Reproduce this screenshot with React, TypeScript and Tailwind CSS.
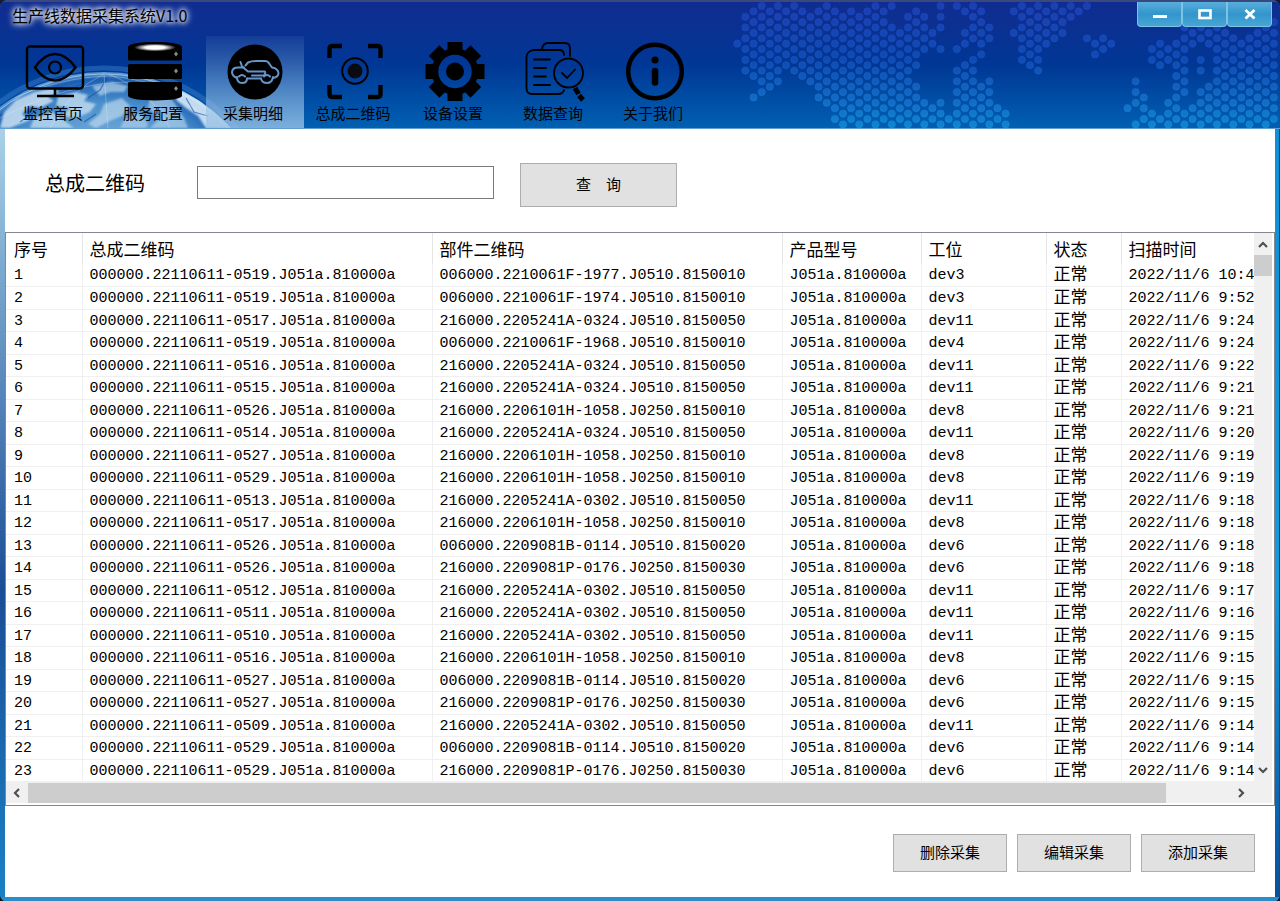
import type { ReactNode } from "react";

type Row = [string, string, string, string];

const ASSEMBLY_PREFIX = "000000.22110611-";
const MODEL = "J051a.810000a";

/* assembly serial, part code, station, scan time */
const ROWS: Row[] = [
  ["0519", "006000.2210061F-1977.J0510.8150010", "dev3", "10:4"],
  ["0519", "006000.2210061F-1974.J0510.8150010", "dev3", "9:52"],
  ["0517", "216000.2205241A-0324.J0510.8150050", "dev11", "9:24"],
  ["0519", "006000.2210061F-1968.J0510.8150010", "dev4", "9:24"],
  ["0516", "216000.2205241A-0324.J0510.8150050", "dev11", "9:22"],
  ["0515", "216000.2205241A-0324.J0510.8150050", "dev11", "9:21"],
  ["0526", "216000.2206101H-1058.J0250.8150010", "dev8", "9:21"],
  ["0514", "216000.2205241A-0324.J0510.8150050", "dev11", "9:20"],
  ["0527", "216000.2206101H-1058.J0250.8150010", "dev8", "9:19"],
  ["0529", "216000.2206101H-1058.J0250.8150010", "dev8", "9:19"],
  ["0513", "216000.2205241A-0302.J0510.8150050", "dev11", "9:18"],
  ["0517", "216000.2206101H-1058.J0250.8150010", "dev8", "9:18"],
  ["0526", "006000.2209081B-0114.J0510.8150020", "dev6", "9:18"],
  ["0526", "216000.2209081P-0176.J0250.8150030", "dev6", "9:18"],
  ["0512", "216000.2205241A-0302.J0510.8150050", "dev11", "9:17"],
  ["0511", "216000.2205241A-0302.J0510.8150050", "dev11", "9:16"],
  ["0510", "216000.2205241A-0302.J0510.8150050", "dev11", "9:15"],
  ["0516", "216000.2206101H-1058.J0250.8150010", "dev8", "9:15"],
  ["0527", "006000.2209081B-0114.J0510.8150020", "dev6", "9:15"],
  ["0527", "216000.2209081P-0176.J0250.8150030", "dev6", "9:15"],
  ["0509", "216000.2205241A-0302.J0510.8150050", "dev11", "9:14"],
  ["0529", "006000.2209081B-0114.J0510.8150020", "dev6", "9:14"],
  ["0529", "216000.2209081P-0176.J0250.8150030", "dev6", "9:14"],
];

const HEADERS = ["序号", "总成二维码", "部件二维码", "产品型号", "工位", "状态", "扫描时间"];

/* Honeycomb world map: for each column, the [first, last] runs of dots. */
const MAP: number[][][] = [
  [[7, 7]], [[2, 12]], [[1, 13], [17, 17]], [[0, 16]], [[1, 15]], [[0, 14]], [[1, 11]], [[0, 12]],
  [[1, 13]], [[2, 14]], [[1, 17]], [[0, 18]], [[1, 21]], [[2, 22]], [[1, 21]], [[2, 22]],
  [[1, 21]], [[0, 22]], [[1, 21]], [[0, 0], [4, 22]], [[5, 21]], [[2, 22]], [[1, 11], [15, 21]], [[2, 8], [18, 22]],
  [[5, 7], [19, 21]], [[0, 4], [8, 8], [18, 22]], [[21, 21]], [[0, 0], [8, 8], [12, 22]], [[1, 1], [5, 7], [11, 21]], [[0, 6], [10, 22]], [[1, 9], [15, 21]], [[4, 6], [14, 22]],
  [[19, 21]], [[20, 22]], [[1, 1], [5, 5]], [[0, 10]], [[1, 11]], [[0, 12]], [[1, 7]], [[0, 6]],
  [[1, 5]], [[0, 2]], [[1, 1]], [[0, 0], [6, 6]], [[7, 9]], [[6, 8]], [[7, 7]], [],
  [[19, 19]], [[14, 18], [22, 22]], [[17, 21]], [[8, 10], [20, 22]], [[7, 11], [21, 21]], [[8, 10], [18, 22]], [[7, 21]], [[4, 16], [20, 22]],
  [[5, 7], [19, 21]], [[4, 6], [10, 12], [16, 22]], [[5, 7], [15, 21]], [[4, 22]], [[5, 21]], [[6, 22]], [[7, 21]], [[6, 22]],
  [[5, 21]], [[4, 22]], [[3, 21]],
];

function DotMap() {
  const dots: ReactNode[] = [];
  MAP.forEach((runs, k) => {
    runs.forEach(([a, b]) => {
      for (let r = a; r <= b; r += 2) {
        dots.push(<circle key={`${k}-${r}`} cx={7.3 + k * 8.13} cy={4 + r * 5.38} r={3.6} />);
      }
    });
  });
  return (
    <svg className="absolute top-0 right-0 h-32 w-[550px]" viewBox="0 0 550 128" aria-hidden="true">
      <defs>
        <linearGradient id="dots" gradientUnits="userSpaceOnUse" x1="0" y1="0" x2="0" y2="128">
          <stop offset="0" stopColor="#1f45bd" />
          <stop offset="0.45" stopColor="#1552c0" />
          <stop offset="0.75" stopColor="#1873cd" />
          <stop offset="1" stopColor="#1294dc" />
        </linearGradient>
      </defs>
      <g fill="url(#dots)" fillOpacity="0.75" stroke="url(#dots)" strokeOpacity="0.6">{dots}</g>
    </svg>
  );
}

function Globe() {
  return (
    <svg className="absolute bottom-0 left-0 h-16 w-[300px]" viewBox="0 64 300 64" aria-hidden="true">
      <defs>
        <radialGradient id="globe" gradientUnits="userSpaceOnUse" cx="104" cy="244" r="172">
          <stop offset="0.6" stopColor="#74aadb" />
          <stop offset="0.82" stopColor="#4a8fcc" />
          <stop offset="0.96" stopColor="#1c5fb2" />
          <stop offset="1" stopColor="#5f9ed6" />
        </radialGradient>
        <clipPath id="disc"><circle cx="104" cy="244" r="172" /></clipPath>
        <filter id="soft" x="-10%" y="-10%" width="120%" height="120%"><feGaussianBlur stdDeviation="1.1" /></filter>
      </defs>
      <circle cx="104" cy="244" r="176" fill="none" stroke="#3878c6" strokeWidth="5" opacity="0.5" />
      <circle cx="104" cy="244" r="172" fill="url(#globe)" />
      <g clipPath="url(#disc)">
        <g filter="url(#soft)" fill="#cbe2f2">
          <path d="M4 112 L16 100 L34 92 L52 88 L60 92 L48 97 L54 101 L40 108 L30 106 L22 114 L30 120 L10 128 L0 128Z" opacity="0.85" />
          <path d="M58 96 L76 92 L88 95 L84 101 L96 104 L90 112 L76 118 L62 116 L70 108 L56 106Z" opacity="0.75" />
          <path d="M92 86 L112 82 L128 86 L124 92 L110 92 L100 96Z" opacity="0.6" />
          <path d="M104 104 L122 98 L130 106 L122 116 L112 120 L96 128 L88 124 L100 114Z" opacity="0.6" />
          <path d="M180 90 L198 98 L216 110 L232 122 L238 128 L206 128 L198 116 L186 108 L176 100Z" opacity="0.95" />
          <path d="M150 96 L166 94 L174 102 L184 118 L188 128 L150 128 L160 118 L148 108Z" opacity="0.55" />
          <path d="M34 118 L52 112 L66 122 L74 128 L30 128Z" opacity="0.7" />
          <path d="M124 120 L140 112 L148 124 L146 128 L120 128Z" opacity="0.5" />
        </g>
        <g fill="none" stroke="#0f4fa5" strokeWidth="1.2" opacity="0.6">
          <path d="M66 90 L84 84 M88 98 L100 90 L108 76 M128 96 L140 90 L152 92 M20 122 L42 106 M186 98 L194 112 L208 116 M84 122 L96 114" />
        </g>
        <g fill="none" stroke="#e2f1fb" strokeWidth="0.8" opacity="0.65">
          <circle cx="104" cy="244" r="170" />
          <path d="M0 104 Q60 76 112 76 Q180 84 250 130 M0 118 Q70 82 130 82 Q190 98 220 128 M104 74 Q70 90 50 128 M108 74 Q150 90 170 128 M104 74 L108 128" opacity="0.6" />
        </g>
      </g>
    </svg>
  );
}

function Icon({ children }: { children: ReactNode }) {
  return (
    <svg className="size-[60px]" viewBox="0 0 60 60" fill="none" stroke="#000" aria-hidden="true">
      {children}
    </svg>
  );
}

const MonitorEye = (
  <Icon>
    <rect x="2" y="4.5" width="56" height="42" rx="3" strokeWidth="2.4" />
    <path d="M30 47V54M12 54H49" strokeWidth="2.6" />
    <path d="M10 25.5Q19 12 30 12T50.5 25.5Q41 38.5 30 38.5T10 25.5Z" strokeWidth="2.4" />
    <circle cx="30" cy="25.5" r="6" strokeWidth="2.2" />
  </Icon>
);

const Server = (
  <Icon>
    <defs>
      <radialGradient id="lid">
        <stop offset="0.45" stopColor="#fff" />
        <stop offset="1" stopColor="#000" />
      </radialGradient>
    </defs>
    <g fill="#000" stroke="none">
      <path d="M3 5Q5 0 30 0T57 5V17Q57 18.5 55.5 18.5H4.500Q3 18.5 3 17Z" />
      <rect x="3" y="22" width="54" height="15" rx="1.5" />
      <path d="M4.5 40H55.5Q57 40 57 41.5V54Q55 58 30 58.5Q5 58 3 54V41.5Q3 40 4.5 40Z" />
    </g>
    <ellipse cx="30" cy="5.5" rx="21" ry="3.8" fill="url(#lid)" stroke="none" />
    <path d="M51 9.5L53 12L51 14.5L49 12ZM51 26.5L53 29L51 31.5L49 29ZM51 44L53 46.5L51 49L49 46.5Z" fill="#8a8a8a" stroke="none" />
  </Icon>
);

const Car = (
  <Icon>
    <circle cx="30" cy="30" r="27.5" fill="#000" stroke="none" />
    <g stroke="#6594c9" strokeWidth="2" strokeLinejoin="round" strokeLinecap="round">
      <path d="M15.5 20L17 24.5L23 29.5H40Q41 32 38.5 33.5H27" />
      <path d="M12 36Q7 34 7 30Q7.500 25.500 13 25.500H19" />
      <path d="M20.5 23.500L23 20.500Q26 19 31 19H40Q43 19 44.500 22L47 25.500Q53 26.500 53.500 31Q53.500 35 48 36" />
      <path d="M22 36.500H36" />
      <path d="M12 35Q12 41 17 41T22 36.500" />
      <path d="M36 36.500Q37 41 42 41T48 35" />
      <path d="M14 34.500Q17 31.500 20 34.500M39 34.500Q42 31.500 45 34.500" />
    </g>
  </Icon>
);

const Scan = (
  <Icon>
    <path d="M4.5 16V7Q4.5 4 7.5 4H17M43 4H52.5Q55.5 4 55.5 7V16M55.5 43V52Q55.5 55 52.5 55H43M17 55H7.5Q4.5 55 4.5 52V43" strokeWidth="4.4" />
    <circle cx="30" cy="29" r="12.8" strokeWidth="2" />
    <circle cx="30" cy="29" r="7.5" fill="#0a0a12" stroke="none" />
  </Icon>
);

const Gear = (
  <Icon>
    <g fill="#000" stroke="none">
      {[0, 45, 90, 135].map((a) => (
        <path key={a} transform={`rotate(${a} 30 29.5)`} d="M22.5 0H37.5V10H22.5ZM22.5 49H37.5V59H22.5Z" />
      ))}
    </g>
    <circle cx="30" cy="29.5" r="20" strokeWidth="6.5" />
    <circle cx="30" cy="29.5" r="9" fill="#000" stroke="none" />
  </Icon>
);

const Search = (
  <Icon>
    <g strokeWidth="1.8" strokeLinecap="round">
      <path d="M17 7Q18 1 23 1H40Q45 1 45 7V14" />
      <path d="M39 13Q39 8 34 8H8Q1.500 10 1.500 15V46Q1.5 52 7 52H33Q38 52 39 48" strokeLinejoin="round" />
      <path d="M9 17.5H25M9 26H21M9 34.5H21M9 43H25" />
      <circle cx="43.5" cy="31" r="14.5" />
      <path d="M37 31L42 36L50 27.5" />
    </g>
    <path d="M50 46L53.5 52M54 53.5L58 58" strokeWidth="5" />
  </Icon>
);

const Info = (
  <Icon>
    <circle cx="30" cy="29.5" r="26.8" strokeWidth="4.5" />
    <circle cx="30" cy="18" r="3.6" fill="#000" stroke="none" />
    <path d="M30 29V40.5" strokeWidth="6.5" strokeLinecap="round" />
  </Icon>
);

const TOOLS: { label: string; icon: ReactNode; active?: boolean }[] = [
  { label: "监控首页", icon: MonitorEye },
  { label: "服务配置", icon: Server },
  { label: "采集明细", icon: Car, active: true },
  { label: "总成二维码", icon: Scan },
  { label: "设备设置", icon: Gear },
  { label: "数据查询", icon: Search },
  { label: "关于我们", icon: Info },
];

function Chevron({ d }: { d: string }) {
  return (
    <svg className="size-3" viewBox="0 0 12 12" fill="none" stroke="#505050" strokeWidth="2.2" aria-hidden="true">
      <path d={d} />
    </svg>
  );
}

function WindowButton({ label, children }: { label: string; children: ReactNode }) {
  return (
    <button
      type="button"
      aria-label={label}
      className="flex h-[25px] w-[45px] items-center justify-center rounded-b border border-t-0 border-[#7cc3e4] bg-linear-to-b from-[#58aedb] via-[#3295cb] to-[#48a6d6]"
    >
      <svg className="h-3 w-4" viewBox="0 0 16 12" fill="none" stroke="#fff" aria-hidden="true">
        {children}
      </svg>
    </button>
  );
}

const BUTTON = "border border-[#adadad] bg-[#e1e1e1] text-[15px] text-black";

export default function App() {
  return (
    <div className="min-h-screen bg-[#151a30] font-['Noto_Sans_CJK_SC',sans-serif] text-black">
      <div className="flex min-h-screen flex-col overflow-hidden rounded-lg bg-[#1b78b8]">
        <header className="relative overflow-hidden border-t-2 border-b border-t-[#39497e] border-b-[#5f9fd2] bg-linear-to-b from-[#102c90] via-[#003795] to-[#0060b2]">
          <DotMap />
          <Globe />
          <div className="relative flex h-[34px] items-start justify-between pr-2 pl-3">
            <h1 className="pt-0.5 text-base leading-[22px] [text-shadow:0_0_4px_#fff,0_0_6px_#fff,0_0_8px_#fff]">生产线数据采集系统V1.0</h1>
            <div className="flex">
              <WindowButton label="最小化"><path d="M1 8.5H15" strokeWidth="3" /></WindowButton>
              <WindowButton label="最大化"><rect x="2.5" y="2.5" width="11" height="7.5" strokeWidth="2.6" /></WindowButton>
              <WindowButton label="关闭"><path d="M3.5 2L12.5 10.5M12.5 2L3.5 10.5" strokeWidth="2.8" /></WindowButton>
            </div>
          </div>
          <nav className="relative flex gap-0.5 pl-1.5">
            {TOOLS.map((t) => (
              <button
                key={t.label}
                type="button"
                className={
                  "flex h-[92px] w-[98px] flex-col items-center pt-1.5 text-[15px] leading-[22px] " +
                  (t.active ? "bg-linear-to-b from-white/5 to-[#9ac2e6]/80" : "")
                }
              >
                {t.icon}
                <span className="mr-1">{t.label}</span>
              </button>
            ))}
          </nav>
        </header>

        <div className="flex grow">
          <div className="w-[5px] shrink-0 bg-linear-to-b from-[#a9d2e8] from-0% via-[#1a4e96] via-60% to-[#1a80c4]" />
          <main className="min-w-0 grow bg-white">
            <form className="flex h-[103px] items-center pt-2 pl-10" onSubmit={(e) => e.preventDefault()}>
              <label htmlFor="code" className="w-[152px] pb-1 text-xl">总成二维码</label>
              <div className="pb-1">
                <input id="code" type="text" className="block h-[33px] w-[297px] border border-[#7a7a7a] bg-white px-2 text-base outline-none" />
              </div>
              <button type="submit" className={`${BUTTON} ml-[26px] h-11 w-[157px]`}>查　询</button>
            </form>

            <section className="border border-[#828790] bg-white">
              <div className="flex">
                <div className="min-w-0 grow">
                  <table className="w-full table-fixed border-collapse text-left font-['Liberation_Mono','Noto_Sans_CJK_SC',monospace] text-[15px] whitespace-nowrap">
                    <colgroup>
                      <col className="w-[76px]" />
                      <col className="w-[350px]" />
                      <col className="w-[350px]" />
                      <col className="w-[139px]" />
                      <col className="w-[125px]" />
                      <col className="w-[75px]" />
                      <col />
                    </colgroup>
                    <thead>
                      <tr className="h-[31px]">
                        {HEADERS.map((h) => (
                          <th key={h} scope="col" className="border-r border-[#e5e5e5] p-0 pl-[7px] font-['Noto_Sans_CJK_SC',sans-serif] text-[17px] leading-[30px] font-normal first:pl-2 last:border-r-0">{h}</th>
                        ))}
                      </tr>
                    </thead>
                    <tbody>
                      {ROWS.map(([serial, part, station, time], i) => (
                        <tr
                          key={i}
                          className="h-[22px] border-b border-[#f0f0f0] leading-[18px] even:h-[23px] [&>td]:border-r [&>td]:border-[#f0f0f0] [&>td]:p-0 [&>td]:pt-[3px] [&>td]:pl-[7px] [&>td:first-child]:pl-2 [&>td:last-child]:border-r-0"
                        >
                          <td>{i + 1}</td>
                          <td>{ASSEMBLY_PREFIX + serial + "." + MODEL}</td>
                          <td>{part}</td>
                          <td>{MODEL}</td>
                          <td>{station}</td>
                          <td className="text-[17px]">正常</td>
                          <td>{"2022/11/6 " + time}</td>
                        </tr>
                      ))}
                    </tbody>
                  </table>
                </div>
                <div className="mr-0.5 flex w-[18px] shrink-0 flex-col items-center bg-[#f0f0f0] py-1.5">
                  <Chevron d="M2 8L6 4L10 8" />
                  <div className="mt-1 h-[21px] w-full bg-[#cdcdcd]" />
                  <div className="grow" />
                  <Chevron d="M2 4L6 8L10 4" />
                </div>
              </div>
              <div className="mr-0.5 mb-0.5 flex h-[21px] items-center bg-[#f0f0f0] pt-px pr-[25px] pl-[5px]">
                <Chevron d="M8 2L4 6L8 10" />
                <div className="flex h-5 grow px-[5px]">
                  <div className="w-11/12 grow bg-[#cdcdcd]" />
                  <div className="w-16 shrink-0" />
                </div>
                <Chevron d="M4 2L8 6L4 10" />
              </div>
            </section>

            <footer className="flex justify-end gap-2.5 pt-7 pr-5 pb-[25px]">
              <button type="button" className={`${BUTTON} h-[38px] w-[114px]`}>删除采集</button>
              <button type="button" className={`${BUTTON} h-[38px] w-[114px]`}>编辑采集</button>
              <button type="button" className={`${BUTTON} h-[38px] w-[114px]`}>添加采集</button>
            </footer>
          </main>
          <div className="w-[5px] shrink-0 border-r border-[#28466e] bg-linear-to-b from-[#0f8fd8] from-0% via-[#149ade] via-60% to-[#0c4f9c]" />
        </div>
        <div className="h-[5px] shrink-0 border-b border-[#0c5a94] bg-[#2a8cc8]" />
      </div>
    </div>
  );
}
